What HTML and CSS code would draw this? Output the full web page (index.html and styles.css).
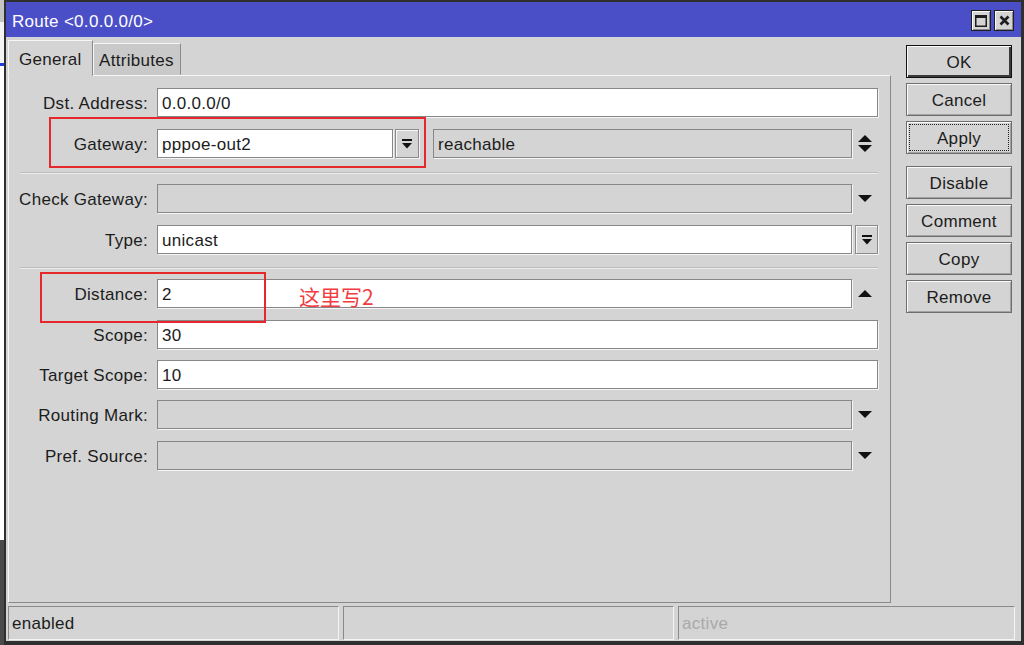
FILE: index.html
```html
<!DOCTYPE html>
<html lang="en">
<head>
    <meta charset="UTF-8">
    <title>Route &lt;0.0.0.0/0&gt;</title>
    <link rel="stylesheet" href="styles.css">
</head>
<body>
    <div class="screen">
        <div class="behind"></div>
        <div class="window">
            <div class="titlebar">
                <span class="title">Route &lt;0.0.0.0/0&gt;</span>
                <div class="win-btns">
                    <span class="win-btn">
                        <svg width="12" height="12" viewBox="0 0 12 12"><rect x="0.75" y="0.75" width="10.5" height="10.5" fill="none" stroke="#1e1e1e" stroke-width="1.5"/><rect x="0" y="0" width="12" height="3" fill="#1e1e1e"/></svg>
                    </span>
                    <span class="win-btn">
                        <svg width="11" height="11" viewBox="0 0 11 11"><path d="M1.5 1.5 L9.5 9.5 M9.5 1.5 L1.5 9.5" stroke="#1e1e1e" stroke-width="2.6"/></svg>
                    </span>
                </div>
            </div>

            <div class="content">
                <div class="left">
                    <div class="tabs">
                        <div class="tab active">General</div>
                        <div class="tab">Attributes</div>
                    </div>
                    <div class="panel">
                        <div class="form">
                            <div class="row">
                                <label>Dst. Address:</label>
                                <div class="field wide">0.0.0.0/0</div>
                            </div>
                            <div class="row">
                                <label>Gateway:</label>
                                <div class="gw">
                                    <div class="field gw-value">pppoe-out2</div>
                                    <span class="drop-btn">
                                        <svg width="10" height="10" viewBox="0 0 10 10"><rect x="0" y="0" width="10" height="2" fill="#111"/><polygon points="0,4 10,4 5,9.5" fill="#111"/></svg>
                                    </span>
                                    <div class="field off gw-state">reachable</div>
                                </div>
                                <span class="arrow">
                                    <svg width="14" height="17" viewBox="0 0 14 17"><polygon points="0,7 7,0 14,7" fill="#111"/><polygon points="0,10 14,10 7,17" fill="#111"/></svg>
                                </span>
                            </div>

                            <div class="sep"></div>

                            <div class="row">
                                <label>Check Gateway:</label>
                                <div class="field off"></div>
                                <span class="arrow">
                                    <svg width="14" height="7" viewBox="0 0 14 7"><polygon points="0,0 14,0 7,7" fill="#111"/></svg>
                                </span>
                            </div>
                            <div class="row">
                                <label>Type:</label>
                                <div class="field">unicast</div>
                                <span class="drop-btn side">
                                    <svg width="10" height="10" viewBox="0 0 10 10"><rect x="0" y="0" width="10" height="2" fill="#111"/><polygon points="0,4 10,4 5,9.5" fill="#111"/></svg>
                                </span>
                            </div>

                            <div class="sep second"></div>

                            <div class="row">
                                <label>Distance:</label>
                                <div class="field">2</div>
                                <span class="arrow">
                                    <svg width="14" height="7" viewBox="0 0 14 7"><polygon points="0,7 14,7 7,0" fill="#111"/></svg>
                                </span>
                            </div>
                            <div class="row">
                                <label>Scope:</label>
                                <div class="field wide">30</div>
                            </div>
                            <div class="row tight">
                                <label>Target Scope:</label>
                                <div class="field wide">10</div>
                            </div>
                            <div class="row tight">
                                <label>Routing Mark:</label>
                                <div class="field off"></div>
                                <span class="arrow">
                                    <svg width="14" height="7" viewBox="0 0 14 7"><polygon points="0,0 14,0 7,7" fill="#111"/></svg>
                                </span>
                            </div>
                            <div class="row">
                                <label>Pref. Source:</label>
                                <div class="field off"></div>
                                <span class="arrow">
                                    <svg width="14" height="7" viewBox="0 0 14 7"><polygon points="0,0 14,0 7,7" fill="#111"/></svg>
                                </span>
                            </div>
                        </div>
                    </div>
                </div>

                <div class="actions">
                    <button class="btn default">OK</button>
                    <button class="btn">Cancel</button>
                    <button class="btn focus">Apply</button>
                    <button class="btn group">Disable</button>
                    <button class="btn">Comment</button>
                    <button class="btn">Copy</button>
                    <button class="btn">Remove</button>
                </div>
            </div>

            <div class="statusbar">
                <div class="cell">enabled</div>
                <div class="cell"></div>
                <div class="cell muted">active</div>
            </div>
        </div>

        <!-- annotations drawn over the screenshot -->
        <div class="mark mark-gateway"></div>
        <div class="mark mark-distance"></div>
        <div class="note">这里写2</div>
    </div>
</body>
</html>
```

FILE: styles.css
```css
body {
    margin: 0;
    background-color: #2f2f2f;
    font-family: "Liberation Sans", Arial, sans-serif;
    font-size: 17px;
    letter-spacing: 0.3px;
    color: #1c1c1c;
}

.screen {
    position: relative;
    display: flex;
    width: 1024px;
    height: 645px;
    padding: 2px 3px 4px 0;
    box-sizing: border-box;
}

.behind {
    width: 4px;
    margin: -2px 2px -4px 0;
    background: linear-gradient(to bottom,
        #c4c4c4 0 22px,
        #f4f4f4 22px 63px,
        #1f3fe0 63px 66px,
        #ffffff 66px 540px,
        #4a4a4a 540px);
}

.window {
    flex: 1;
    display: flex;
    flex-direction: column;
    background-color: #d4d4d4;
}

/* title bar */
.titlebar {
    height: 35px;
    flex: 0 0 35px;
    background-color: #4b4fc7;
    color: #fff;
    display: flex;
    align-items: center;
    justify-content: space-between;
    padding: 0 7px 0 6px;
}

.title {
    padding-top: 5px;
}

.win-btns {
    display: flex;
    gap: 3px;
    padding-top: 2px;
}

.win-btn {
    width: 18px;
    height: 19px;
    border: 1px solid #1e1e1e;
    background-color: #d4d4d4;
    box-shadow: inset 1px 1px 0 #fafafa, inset -1px -1px 0 #8a8a8a;
    display: flex;
    align-items: center;
    justify-content: center;
}

/* main area */
.content {
    display: flex;
    height: 568px;
}

.left {
    width: 883px;
    padding-left: 2px;
}

.tabs {
    height: 38px;
    display: flex;
    align-items: flex-end;
}

.tab {
    box-sizing: border-box;
    display: flex;
    align-items: center;
    border: 1px solid;
    border-color: #f6f6f6 #8a8a8a transparent #f6f6f6;
}

.tab.active {
    width: 85px;
    height: 36px;
    margin-bottom: -1px;
    padding: 3px 0 0 10px;
    position: relative;
    z-index: 1;
    background-color: #d4d4d4;
}

.tab:not(.active) {
    width: 88px;
    height: 32px;
    padding: 4px 0 0 5px;
    background-color: #c9c9c9;
}

.panel {
    height: 528px;
    box-sizing: border-box;
    border: 1px solid;
    border-color: #f6f6f6 #8a8a8a #8a8a8a #f6f6f6;
    padding: 12px 12px 0 0;
}

.form {
    display: flex;
    flex-direction: column;
    gap: 12px;
}

.row {
    display: grid;
    grid-template-columns: 148px 1fr 26px;
    align-items: center;
    height: 29px;
}

.row.tight {
    margin-top: -1px;
}

.row label {
    text-align: right;
    padding: 3px 9px 0 0;
    white-space: nowrap;
}

.field {
    height: 29px;
    box-sizing: border-box;
    border: 1px solid #878787;
    background-color: #fff;
    box-shadow: 1px 1px 0 #f6f6f6;
    padding: 3px 0 0 4px;
    display: flex;
    align-items: center;
    white-space: nowrap;
}

.field.wide {
    grid-column: 2 / 4;
}

.field.off {
    background-color: #d4d4d4;
}

.gw {
    display: flex;
    align-items: center;
}

.gw-value {
    width: 236px;
}

.gw-state {
    flex: 1;
    margin-left: 14px;
}

.drop-btn {
    width: 24px;
    height: 29px;
    box-sizing: border-box;
    margin-left: 2px;
    border: 1px solid #8a8a8a;
    box-shadow: inset 1px 1px 0 #f8f8f8, 1px 1px 0 #f4f4f4;
    display: flex;
    align-items: center;
    justify-content: center;
}

.drop-btn.side {
    width: 23px;
    justify-self: end;
}

.arrow {
    display: flex;
    justify-content: center;
}

.sep {
    height: 2px;
    box-sizing: border-box;
    margin: 2px 0 -2px 11px;
    border-top: 1px solid #bdbdbd;
    border-bottom: 1px solid #ececec;
}

.sep.second {
    margin-top: 1px;
}

/* buttons on the right */
.actions {
    display: flex;
    flex-direction: column;
    padding: 8px 0 0 15px;
}

.btn {
    width: 106px;
    height: 33px;
    margin-bottom: 5px;
    font-family: inherit;
    font-size: 17px;
    letter-spacing: 0.3px;
    color: #1c1c1c;
    background-color: #d4d4d4;
    border: 1px solid #6e6e6e;
    box-shadow: inset 1px 1px 0 #fafafa, inset -1px -1px 0 #a2a2a2;
    padding: 2px 0 0;
}

.btn.default {
    border-color: #111;
    box-shadow: inset 1px 1px 0 #fafafa, inset -2px -2px 0 #3a3a3a;
}

.btn.focus {
    outline: 1px dotted #222;
    outline-offset: -4px;
}

.btn.group {
    margin-top: 7px;
}

/* status bar */
.statusbar {
    display: flex;
    gap: 4px;
    height: 36px;
    box-sizing: border-box;
    padding: 1px 6px 1px 2px;
}

.cell {
    width: 331px;
    box-sizing: border-box;
    border: 1px solid;
    border-color: #8a8a8a #f4f4f4 #f4f4f4 #8a8a8a;
    padding: 2px 0 0 3px;
    display: flex;
    align-items: center;
}

.cell:last-child {
    flex: 1;
}

.cell.muted {
    color: #a9a9a9;
}

/* red annotations */
.mark {
    position: absolute;
    border: 2px solid #e6282d;
    box-sizing: border-box;
}

.mark-gateway {
    left: 49px;
    top: 117px;
    width: 377px;
    height: 51px;
}

.mark-distance {
    left: 40px;
    top: 272px;
    width: 226px;
    height: 51px;
}

.note {
    position: absolute;
    left: 299px;
    top: 286px;
    font-family: "Noto Sans CJK SC", "Liberation Sans", sans-serif;
    font-size: 21px;
    letter-spacing: 0;
    line-height: 1;
    color: #f23c3f;
}
```
